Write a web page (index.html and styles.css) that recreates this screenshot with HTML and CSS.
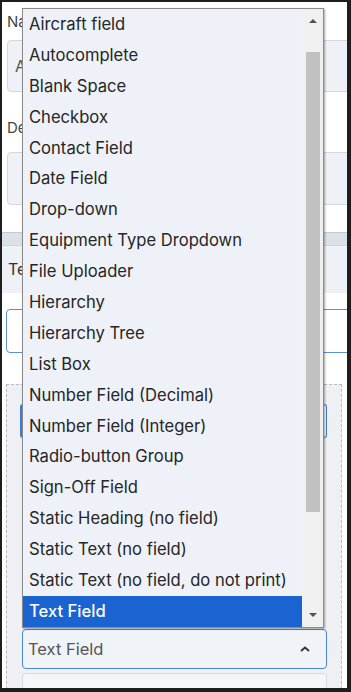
FILE: index.html
```html
<!DOCTYPE html>
<html>
<head>
    <title>Field Type Picker</title>
    <link rel="stylesheet" href="styles.css">
</head>
<body>
    <div class="frame">
        <div class="page">
            <div class="field-label">Name</div>
            <div class="field-input">A</div>

            <div class="field-label desc">Description</div>
            <div class="field-input tall"></div>

            <div class="divider"></div>
            <div class="section-head"><span class="clip">Template Fields</span></div>

            <div class="search-input"></div>

            <div class="drop-zone">
                <div class="zone-input"></div>
                <div class="type-select">
                    <span>Text Field</span>
                    <svg class="chevron" width="10" height="6" viewBox="0 0 10 6">
                        <polyline points="1,5 5,1.5 9,5" fill="none" stroke="#333" stroke-width="1.8"/>
                    </svg>
                </div>
                <div class="zone-next"></div>
            </div>
        </div>

        <div class="listbox">
            <div class="options">
                <div class="option">Aircraft field</div>
                <div class="option">Autocomplete</div>
                <div class="option">Blank Space</div>
                <div class="option">Checkbox</div>
                <div class="option">Contact Field</div>
                <div class="option">Date Field</div>
                <div class="option">Drop-down</div>
                <div class="option">Equipment Type Dropdown</div>
                <div class="option">File Uploader</div>
                <div class="option">Hierarchy</div>
                <div class="option">Hierarchy Tree</div>
                <div class="option">List Box</div>
                <div class="option">Number Field (Decimal)</div>
                <div class="option">Number Field (Integer)</div>
                <div class="option">Radio-button Group</div>
                <div class="option">Sign-Off Field</div>
                <div class="option">Static Heading (no field)</div>
                <div class="option">Static Text (no field)</div>
                <div class="option">Static Text (no field, do not print)</div>
                <div class="option selected">Text Field</div>
            </div>
            <div class="scrollbar">
                <div class="scroll-btn"><span class="arrow-up"></span></div>
                <div class="scroll-track">
                    <div class="scroll-thumb"></div>
                </div>
                <div class="scroll-btn"><span class="arrow-down"></span></div>
            </div>
        </div>
    </div>
</body>
</html>
```

FILE: styles.css
```css
html, body {
    margin: 0;
    padding: 0;
    background: #1e1e1e;
}
body {
    font-family: Inter, "Noto Sans", sans-serif;
    width: 351px;
    height: 692px;
    overflow: hidden;
}
.frame {
    position: relative;
    box-sizing: border-box;
    width: 351px;
    height: 692px;
    border: 2px solid #1e1e1e;
    border-right-width: 4px;
    border-bottom-width: 4px;
    overflow: hidden;
    background: #fff;
}
.page {
    padding-top: 10px;
    white-space: nowrap;
}
.field-label {
    width: 15px;
    overflow: hidden;
    height: 20px;
    line-height: 20px;
    font-size: 15px;
    color: #444;
    padding-left: 5px;
    margin-bottom: 8px;
}
.field-label.desc {
    margin-top: 26px;
    margin-bottom: 14px;
}
.field-input {
    box-sizing: border-box;
    height: 52px;
    margin-left: 5px;
    margin-right: -10px;
    border: 1px solid #d4d8df;
    border-radius: 4px;
    background: #eef1f6;
    padding-left: 7px;
    line-height: 50px;
    font-size: 16px;
    color: #555;
}
.field-input.tall {
    height: 53px;
}
.divider {
    margin-top: 27px;
    height: 12px;
    border-top: 1px solid #c3cad4;
    background: #dbe1e9;
}
.section-head {
    height: 47px;
    line-height: 47px;
    background: #eef1f6;
    border-top: 1px solid #cfd6df;
    padding-left: 6px;
    font-size: 16px;
    color: #333;
}
.clip {
    display: inline-block;
    width: 16px;
    overflow: hidden;
    vertical-align: top;
}
.search-input {
    box-sizing: border-box;
    height: 44px;
    margin: 16px -10px 0 4px;
    border: 1px solid #5b8fd6;
    border-radius: 4px;
    background: #fff;
}
.drop-zone {
    box-sizing: border-box;
    margin: 31px 5px 0 4px;
    height: 320px;
    border: 1px dashed #b8bcc2;
    border-bottom: none;
    background: #eef0f4;
    padding: 19px 13px 0 13px;
}
.zone-input {
    height: 32px;
    border: 1px solid #3d7bd6;
    border-left-width: 2px;
    border-radius: 3px;
    background: #f4f6f9;
    margin-right: 1px;
}
.type-select {
    box-sizing: border-box;
    display: flex;
    align-items: center;
    justify-content: space-between;
    height: 40px;
    margin: 191px 1px 0 2px;
    padding: 0 16px 0 5px;
    border: 1px solid #4a86d8;
    border-radius: 4px;
    background: #f0f3f8;
    font-size: 16.5px;
    color: #555;
}
.chevron {
    display: block;
}
.zone-next {
    height: 40px;
    margin: 4px 1px 0 2px;
    border: 1px solid #d6dae1;
    border-radius: 3px;
    background: #f3f5f8;
}

/* open dropdown overlay */
.listbox {
    position: absolute;
    left: 20px;
    top: 6px;
    width: 302px;
    height: 620px;
    box-sizing: border-box;
    display: flex;
    border: 1px solid #8a8a8a;
    background: #eef2f8;
    box-shadow: 1px 1px 2px rgba(0,0,0,0.35);
}
.options {
    width: 279px;
}
.option {
    height: 30.9px;
    line-height: 30.9px;
    padding-left: 6px;
    font-size: 16.6px;
    color: #262626;
    white-space: nowrap;
}
.option.selected {
    background: #1a64d1;
    color: #fff;
    font-weight: 500;
}
.scrollbar {
    width: 20px;
    margin-left: 1px;
    display: flex;
    flex-direction: column;
    background: #f0f0f0;
}
.scroll-btn {
    height: 24px;
    display: flex;
    align-items: center;
    justify-content: center;
}
.arrow-up, .arrow-down {
    width: 0;
    height: 0;
    border-left: 4px solid transparent;
    border-right: 4px solid transparent;
}
.arrow-up {
    border-bottom: 4px solid #505050;
}
.arrow-down {
    border-top: 4px solid #505050;
}
.scroll-track {
    flex: 1;
    padding: 19px 3px 0 3px;
}
.scroll-thumb {
    height: 460px;
    background: #c1c1c1;
}
```
